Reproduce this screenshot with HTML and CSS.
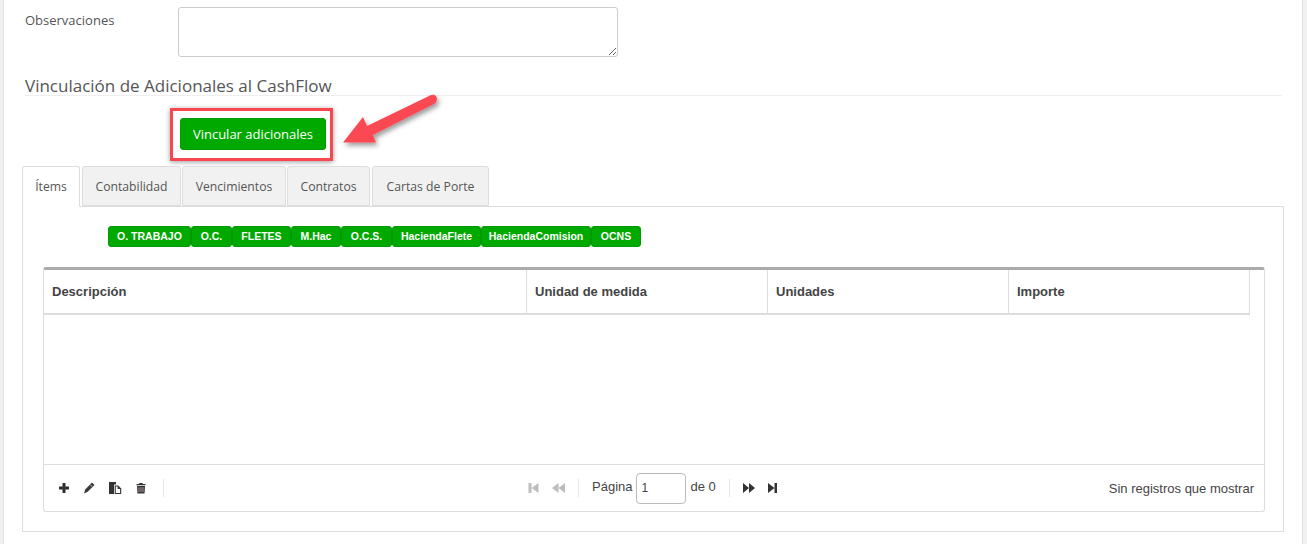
FILE: index.html
```html
<!DOCTYPE html>
<html lang="es">
<head>
<meta charset="utf-8">
<title>Vinculación de Adicionales</title>
<link rel="stylesheet" href="styles.css">
</head>
<body>
<main class="panel">
  <div class="form-row">
    <label class="form-label">Observaciones</label>
    <textarea class="form-area"></textarea>
  </div>
  <h3 class="section-title">Vinculación de Adicionales al CashFlow</h3>
  <div class="action-row">
    <button class="link-btn">Vincular adicionales</button>
  </div>
  <ul class="tabs">
    <li class="tab tab-active">Ítems</li>
    <li class="tab tab-1">Contabilidad</li>
    <li class="tab tab-2">Vencimientos</li>
    <li class="tab tab-3">Contratos</li>
    <li class="tab tab-4">Cartas de Porte</li>
  </ul>
  <section class="tab-body">
    <div class="chips">
      <span class="chip c1">O. TRABAJO</span>
      <span class="chip c2">O.C.</span>
      <span class="chip c3">FLETES</span>
      <span class="chip c4">M.Hac</span>
      <span class="chip c5">O.C.S.</span>
      <span class="chip c6">HaciendaFlete</span>
      <span class="chip c7">HaciendaComision</span>
      <span class="chip c8">OCNS</span>
    </div>
    <div class="grid">
      <div class="grid-head">
        <div class="col col-a">Descripción</div>
        <div class="col col-b">Unidad de medida</div>
        <div class="col col-b">Unidades</div>
        <div class="col col-b">Importe</div>
      </div>
      <div class="grid-body"></div>
      <div class="pager">
        <div class="pager-left">
          <svg class="ico" viewBox="0 0 12 12"><path d="M4.500 1h3v3.500H11v3H7.500V11h-3V7.500H1v-3h3.500z" fill="#2f2f2f"/></svg>
          <svg class="ico" viewBox="0 0 12 12"><path d="M9 .5l2.500 2.400-6.800 6.900-3.700 1.700 1.200-4z" fill="#3a3a3a"/><path d="M7.300 2.800l1.900 1.900" stroke="#fff" stroke-width=".7"/></svg>
          <svg class="ico ico-copy" viewBox="0 0 14 14"><path d="M1 1h7v2.500H6V13H1z" fill="#333"/><path d="M6.700 4.500h3.500l3 3V13H6.700z" fill="#333"/><path d="M7.800 5.600h1.800v2.500h2.500V12H7.800z" fill="#fff"/></svg>
          <svg class="ico" viewBox="0 0 12 12"><path d="M4.500 1h3l.5 1h2.500v1.300h-9V2H4z" fill="#333"/><path d="M2 4h8l-.5 7.500h-7z" fill="#333"/><path d="M4 5.200v5M6 5.200v5M8 5.200v5" stroke="#b9a0a8" stroke-width=".9"/></svg>
          <span class="sep sep-left"></span>
        </div>
        <div class="pager-center">
          <svg class="ico-nav nav-first" viewBox="0 0 11 12"><path d="M.5 1h3v10h-3zM3.500 6L10.500 1v10z" fill="#bdbdbd"/></svg>
          <svg class="ico-nav nav-prev" viewBox="0 0 13 12"><path d="M0 6l6.500-5v10zM6.500 6L13 1v10z" fill="#bdbdbd"/></svg>
          <span class="sep"></span>
          <span class="pager-text">Página</span>
          <input class="page-input" value="1">
          <span class="pager-text">de 0</span>
          <span class="sep"></span>
          <svg class="ico-nav nav-next" viewBox="0 0 12 12"><path d="M0 1l6 5-6 5zM6 1l6 5-6 5z" fill="#333"/></svg>
          <svg class="ico-nav nav-last" viewBox="0 0 9 12"><path d="M0 1l6.500 5L0 11zM6.500 1H9v10H6.500z" fill="#333"/></svg>
        </div>
        <div class="pager-right">Sin registros que mostrar</div>
      </div>
    </div>
  </section>
</main>
<div class="mark-box"></div>
<svg class="mark-arrow" viewBox="0 0 110 70" width="110" height="70">
  <defs><filter id="sh" x="-20%" y="-20%" width="140%" height="150%"><feDropShadow dx="2" dy="3" stdDeviation="2.500" flood-color="#000" flood-opacity=".4"/></filter></defs>
  <path d="M3 48.500L23 23l4 9L90 1.500c4-2 7 .5 7 3.500s-2 4.500-4 5.500L33 41l3 7.500z" fill="#fb4a52" filter="url(#sh)"/>
</svg>
</body>
</html>
```
FILE: styles.css
```css
* { box-sizing: border-box; }
html, body { margin: 0; height: 544px; overflow: hidden; }
body { background: #f1f1f1; color: #444; font-family: "Open Sans", sans-serif; position: relative; }
.panel {
  margin: 0 4px 0 3px;
  height: 544px;
  background: #fff;
  border-left: 1px solid #e2e2e2;
  border-right: 1px solid #e2e2e2;
  padding: 7px 18px 0 18px;
}
.form-row { display: flex; height: 50px; }
.form-label { width: 156px; padding: 5px 0 0 3px; font-size: 13px; line-height: 16px; color: #555; }
.form-area {
  width: 440px; height: 50px; border: 1px solid #ccc; border-radius: 3px; background: #fff; margin: 0; display: block;
}
.section-title {
  margin: 19px 0 0 3px;
  height: 20px;
  width: 1257px;
  font-weight: 400; font-size: 17px; line-height: 19px;
  color: #555;
  border-bottom: 1px solid #eee;
}
.action-row { height: 70px; padding: 22px 0 0 158px; }
.link-btn {
  display: block; width: 146px; height: 32px; margin: 0; padding: 0;
  background: #00a900; border: 1px solid #059a05; border-radius: 3px;
  color: #fff; font-family: "Open Sans", sans-serif; font-size: 13px;
}
.tabs { display: flex; list-style: none; margin: 0; padding: 0; height: 41px; position: relative; z-index: 1; }
.tab {
  height: 40px; border: 1px solid #ddd; border-radius: 3px 3px 0 0;
  background: #f1f1f1; color: #555; font-size: 12.200px; line-height: 39px; text-align: center;
}
.tab-active { width: 58px; height: 41px; background: #fff; border-bottom-color: #fff; margin-right: 2px; }
.tab-1 { width: 99px; margin-right: 1px; }
.tab-2 { width: 104px; margin-right: 1px; }
.tab-3 { width: 83px; margin-right: 2px; }
.tab-4 { width: 117px; }
.tab-body {
  width: 1262px; height: 326px; margin-top: -1px;
  border: 1px solid #ddd;
  padding: 19px 20px 0 20px;
}
.chips { display: flex; height: 21px; margin-left: 65px; }
.chip {
  height: 21px; background: #00a900; border: 1px solid #059a05; border-radius: 3px;
  color: #fff; font-family: "Liberation Sans", Arial, sans-serif; font-weight: 700; font-size: 10.500px; line-height: 19px; text-align: center;
}
.c1 { width: 83px; } .c2 { width: 41px; } .c3 { width: 59px; } .c4 { width: 50px; }
.c5 { width: 51px; } .c6 { width: 89px; } .c7 { width: 110px; } .c8 { width: 50px; }
.grid {
  margin-top: 20px; width: 1222px; height: 245px;
  border: 1px solid #ddd; border-top: 3px solid #aaa; border-radius: 3px;
  display: flex; flex-direction: column;
  font-family: "Liberation Sans", Arial, sans-serif;
}
.grid-head { display: flex; width: 1206px; height: 45px; border-bottom: 2px solid #ddd; border-right: 1px solid #ddd; flex: none; }
.col { height: 43px; line-height: 43px; padding-left: 8px; font-weight: 700; font-size: 13px; color: #444; }
.col-a { width: 482px; }
.col-b { width: 241px; border-left: 1px solid #ddd; }
.grid-body { flex: 1; }
.pager {
  height: 47px; flex: none; border-top: 1px solid #ddd;
  display: grid; grid-template-columns: 470px auto 1fr; align-items: center;
  padding: 0 10px 0 14px; font-size: 13px; color: #444;
}
.pager-left { display: flex; align-items: center; gap: 13px; }
.ico { width: 12px; height: 12px; display: block; flex: none; }
.ico-copy { width: 14px; height: 14px; }
.sep { width: 1px; height: 18px; background: #e6e6e6; display: block; flex: none; }
.sep-left { margin-left: 3px; }
.pager-center { display: flex; align-items: center; gap: 13px; }
.ico-nav { height: 12px; display: block; flex: none; }
.nav-first { width: 11px; }
.nav-prev { width: 13px; }
.nav-next { width: 12px; }
.nav-last { width: 9px; }
.pager-text { line-height: 15px; margin-top: -3px; }
.page-input {
  width: 50px; height: 31px; margin: 0 -9px; padding: 0 4px;
  border: 1px solid #bbb; border-radius: 4px; font: 12px "Liberation Sans", Arial, sans-serif; color: #444; background: #fff;
}
.pager-right { text-align: right; }
.mark-box {
  position: absolute; left: 170px; top: 108px; width: 163px; height: 53px;
  border: 3px solid #f9474f; box-shadow: 0 1px 5px rgba(0,0,0,.4);
}
.mark-arrow { position: absolute; left: 340px; top: 94px; }
```
